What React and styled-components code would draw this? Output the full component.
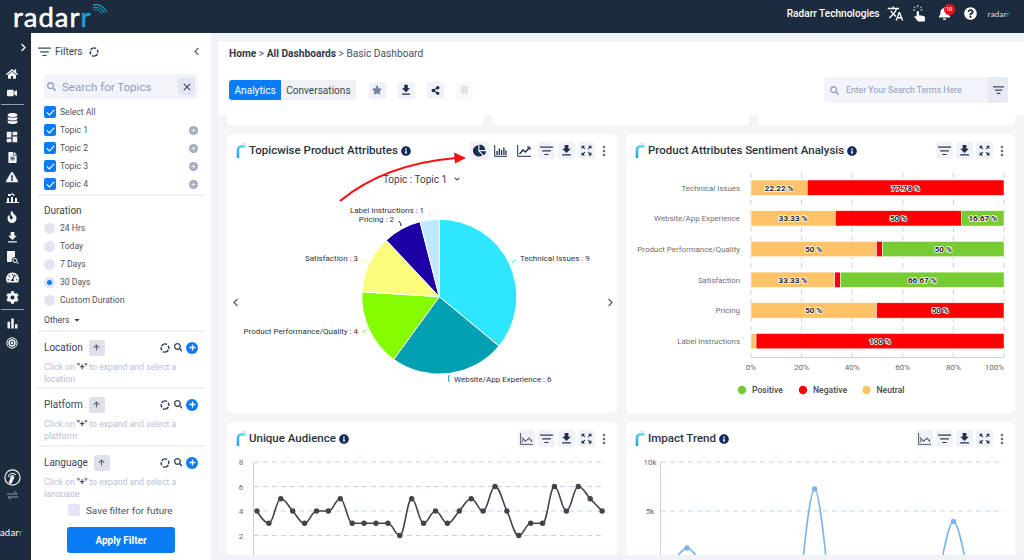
import { createGlobalStyle, styled } from 'styled-components';
import {
  FaHome, FaVideo, FaDatabase, FaFileAlt, FaExclamationTriangle, FaFire, FaTachometerAlt, FaCog,
  FaBell, FaQuestionCircle, FaChartPie, FaStar, FaBookmark, FaShareAlt, FaInfoCircle, FaSearch,
  FaPlus, FaArrowUp, FaChevronLeft, FaChevronRight, FaChevronDown, FaCaretDown,
} from 'react-icons/fa';
import { MdDashboard, MdFileDownload, MdTranslate, MdMoreVert, MdZoomOutMap, MdClose, MdBarChart } from 'react-icons/md';

const GRID = '#c6d1ee';

const GlobalStyle = createGlobalStyle`
  html, body { margin: 0; padding: 0; }
  body { font-family: Roboto, "Liberation Sans", sans-serif; background: #f1f2f7; }
  * { box-sizing: border-box; }
`;

const Page = styled.div`
  position: relative;
  width: 1024px;
  height: 560px;
  overflow: hidden;
  display: flex;
  flex-direction: column;
`;

const TopHeader = styled.header`
  height: 33px;
  flex: none;
  background: #1c2c3e;
  display: flex;
  align-items: flex-start;
  justify-content: space-between;
  padding: 0 14px 0 13px;
  color: #fff;
`;

const Logo = styled.div`
  position: relative;
  font-family: Lato, sans-serif;
  font-size: 27.5px;
  line-height: 33px;
  letter-spacing: 1px;
  -webkit-text-stroke: 0.5px currentColor;
  span { color: #1c9fd6; }
  svg { position: absolute; left: 79px; top: 3px; }
`;

const HeaderRight = styled.div`
  display: flex;
  align-items: center;
  height: 27px;
  font-size: 10.1px;
  font-weight: 500;
`;

const Company = styled.span`
  margin-right: 7px;
`;

const Bell = styled.span`
  position: relative;
  display: flex;
  margin: 0 13px 0 12px;
`;

const Badge = styled.span`
  position: absolute;
  top: -3px;
  left: 6px;
  width: 11px;
  height: 11px;
  border-radius: 50%;
  background: #f3121c;
  font-size: 5.5px;
  line-height: 11px;
  text-align: center;
`;

const MiniLogo = styled.span`
  font-family: Lato, sans-serif;
  font-size: ${({ $big }) => $big ? 9.5 : 8}px;
  letter-spacing: 0.2px;
  color: ${({ $big }) => $big ? '#fff' : '#d7dbe0'};
  margin: ${({ $big }) => $big ? '0 0 0 -5px' : '0 0 0 11px'};
  i { color: #1c9fd6; font-style: normal; }
`;

const Body = styled.div`
  flex: 1;
  display: flex;
  min-height: 0;
`;

const Rail = styled.nav`
  width: 31px;
  flex: none;
  background: #1c2c3e;
  color: #f2f4f7;
  display: flex;
  flex-direction: column;
  padding: 4px 7px 0 0;
  overflow: hidden;
`;

const RailItem = styled.div`
  height: ${({ $h }) => $h || 20}px;
  display: flex;
  align-items: center;
  justify-content: ${({ $end }) => $end ? 'flex-end' : 'center'};
  margin-right: ${({ $end }) => $end ? -4 : 0}px;
  flex: none;
`;

const RailRule = styled.div`
  height: 1px;
  background: #93a0ad;
  margin: 2px 0 4px 1px;
  flex: none;
`;

const RailBottom = styled.div`
  margin-top: auto;
  display: flex;
  flex-direction: column;
  padding-bottom: 18px;
`;

const FilterPanel = styled.aside`
  width: 180px;
  flex: none;
  background: #fff;
  display: flex;
  flex-direction: column;
  color: #4b5262;
`;

const PanelHead = styled.div`
  display: flex;
  align-items: center;
  height: 19px;
  margin: 9px 10px 13px 7px;
  font-size: 10px;
  gap: 4px;
  color: #3b4455;
  span { margin-right: 2px; }
  svg:last-child { margin-left: auto; color: #667085; }
`;

const SearchBox = styled.div`
  height: 25px;
  margin: 0 13px;
  border-radius: 3px;
  background: #f3f4f9;
  display: flex;
  align-items: center;
  padding: 0 3px;
  font-size: 11.5px;
  color: #8d9dbd;
  gap: 5px;
  span { margin-left: 1px; }
`;

const ClearButton = styled.i`
  margin-left: auto;
  width: 17px;
  height: 17px;
  background: #e3e5f0;
  border-radius: 2px;
  display: flex;
  align-items: center;
  justify-content: center;
  color: #2a3f66;
`;

const CheckList = styled.div`
  margin: 4px 7px 0;
  padding: 0 6px 1px;
  border-bottom: 2px solid #eff0f3;
`;

const CheckRow = styled.div`
  height: 18px;
  display: flex;
  align-items: center;
  font-size: 8.6px;
  gap: 4px;
`;

const CheckBox = styled.span`
  width: 12px;
  height: 12px;
  flex: none;
  border-radius: 2px;
  background: #0a7cf5;
  display: flex;
  align-items: center;
  justify-content: center;
`;

const AddDot = styled.span`
  margin-left: auto;
  width: 9px;
  height: 9px;
  border-radius: 50%;
  background: #a3abbd;
  display: flex;
  align-items: center;
  justify-content: center;
  color: #e8eaf0;
`;

const Duration = styled.div`
  margin: 0 7px;
  padding: 7px 6px 0;
  height: 136px;
  border-bottom: 2px solid #eff0f3;
`;

const GroupTitle = styled.div`
  font-size: 10px;
  line-height: 16px;
  color: #3b4455;
`;

const RadioRow = styled.div`
  height: 18px;
  display: flex;
  align-items: center;
  font-size: 8.6px;
  gap: 5px;
  &:first-of-type { margin-top: 2px; }
`;

const Radio = styled.span`
  width: 11px;
  height: 11px;
  border-radius: 50%;
  background: #e4e4f2;
  display: flex;
  align-items: center;
  justify-content: center;
  &::after {
    content: '';
    width: 5px;
    height: 5px;
    border-radius: 50%;
    background: ${({ $on }) => $on ? '#0a7cf5' : 'transparent'};
  }
`;

const Others = styled.div`
  display: flex;
  align-items: center;
  gap: 4px;
  font-size: 8.6px;
  height: 20px;
  margin-top: 1px;
  color: #3b4455;
`;

const FilterGroup = styled.div`
  margin: 0 7px;
  padding: 7px 6px 0;
  height: ${({ $h }) => $h}px;
  overflow: hidden;
  flex: none;
  border-bottom: ${({ $last }) => $last ? 'none' : '2px solid #eff0f3'};
`;

const GroupHead = styled.div`
  display: flex;
  align-items: center;
  height: 17px;
  gap: 6px;
  margin-bottom: 5px;
`;

const UpButton = styled.span`
  width: 16px;
  height: 16px;
  background: #dfe1ea;
  border-radius: 2px;
  display: flex;
  align-items: center;
  justify-content: center;
  color: #5b6477;
`;

const GroupTools = styled.span`
  margin-left: auto;
  display: flex;
  align-items: center;
  gap: 4px;
  color: #39435a;
`;

const PlusDot = styled.span`
  width: 12px;
  height: 12px;
  border-radius: 50%;
  background: #0a7cf5;
  color: #fff;
  display: flex;
  align-items: center;
  justify-content: center;
`;

const Help = styled.div`
  font-size: 8.7px;
  line-height: 12px;
  color: #b8c1d6;
  b { color: #4b5262; }
`;

const SaveRow = styled.div`
  display: flex;
  align-items: center;
  gap: 6px;
  font-size: 9.9px;
  margin-top: 7px;
  height: 12px;
  padding-left: 37px;
  span {
    width: 12px;
    height: 12px;
    border-radius: 2px;
    background: #e4e4f2;
  }
`;

const ApplyButton = styled.button`
  display: block;
  width: 108px;
  height: 26px;
  margin: 11px 0 0 36px;
  border: none;
  border-radius: 3px;
  background: #0a7cf5;
  color: #fff;
  font: 700 10px Roboto, sans-serif;
`;

const Main = styled.main`
  flex: 1;
  min-width: 0;
  padding: 8px 0 5px 7px;
  display: flex;
  flex-direction: column;
`;

const TopBar = styled.section`
  height: 74px;
  flex: none;
  background: #fff;
  padding: 6px 16px 0 11px;
`;

const Crumbs = styled.div`
  font-size: 10.2px;
  line-height: 13px;
  color: #4b5262;
  b { color: #2f3a4c; font-weight: 700; }
`;

const ActionRow = styled.div`
  margin-top: 17px;
  height: 26px;
  display: flex;
  align-items: center;
`;

const Tab = styled.span`
  height: 20px;
  display: flex;
  align-items: center;
  padding: 0 ${({ $active }) => $active ? 5.5 : 5}px;
  font-size: 10.1px;
  background: ${({ $active }) => $active ? '#0a7cf5' : '#f1f2f8'};
  color: ${({ $active }) => $active ? '#fff' : '#3b4455'};
  border-radius: ${({ $active }) => $active ? '3px 0 0 3px' : '0 3px 3px 0'};
`;

const Tabs = styled.div`
  display: flex;
  margin-right: 13px;
`;

const SquareButton = styled.span`
  width: 17px;
  height: 17px;
  margin-right: 12px;
  border-radius: 3px;
  background: ${({ $faint }) => $faint ? '#f8f9fc' : '#f1f2f8'};
  color: ${({ $tone }) => $tone || '#1c2f52'};
  display: flex;
  align-items: center;
  justify-content: center;
`;

const TermSearch = styled.div`
  margin-left: auto;
  width: 184px;
  height: 26px;
  border-radius: 3px;
  background: #f3f4f9;
  display: flex;
  align-items: center;
  padding-left: 6px;
  gap: 7px;
  font-size: 8.7px;
  color: #8d9dbd;
`;

const TermFilter = styled.span`
  margin-left: auto;
  width: 20px;
  height: 26px;
  background: #e8eaf3;
  border-radius: 0 3px 3px 0;
  display: flex;
  align-items: center;
  justify-content: center;
`;

const Dashboard = styled.section`
  flex: 1;
  min-height: 0;
  overflow: hidden;
  background: #f5f5f6;
  padding: 0 9px;
`;

const StubRow = styled.div`
  display: grid;
  grid-template-columns: repeat(3, 1fr);
  gap: 9px;
  margin-bottom: 9px;
`;

const Stub = styled.div`
  height: 10px;
  background: #fff;
  border-radius: 0 0 4px 4px;
`;

const CardGrid = styled.div`
  display: grid;
  grid-template-columns: 390px 389px;
  grid-auto-rows: 279px;
  gap: 9px;
`;

const Card = styled.article`
  background: #fff;
  border-radius: 5px;
  padding-top: 7px;
  overflow: hidden;
`;

const CardHead = styled.div`
  display: flex;
  align-items: center;
  height: 19px;
  padding: 0 8px 0 9px;
`;

const CardTitle = styled.h3`
  margin: 0 0 1px 2px;
  font-size: 11.5px;
  font-weight: 500;
  color: #2a3342;
  white-space: nowrap;
`;

const InfoIcon = styled(FaInfoCircle)`
  margin-left: 3px;
  color: #14295c;
`;

const Toolbar = styled.div`
  margin-left: auto;
  display: flex;
  align-items: center;
  gap: 3px;
`;

const ToolButton = styled.span`
  width: ${({ $active }) => $active ? 19 : 17}px;
  height: ${({ $active }) => $active ? 19 : 17}px;
  margin-right: ${({ $plain }) => $plain ? 3 : 0}px;
  border-radius: 3px;
  background: ${({ $plain }) => $plain ? 'transparent' : '#f1f2f8'};
  color: #1c2f52;
  display: flex;
  align-items: center;
  justify-content: center;
`;

const Dots = styled(MdMoreVert)`
  margin: 0 -3px 0 -2px;
  color: #6a7487;
`;

const TopicSelect = styled.div`
  height: 16px;
  margin-top: 11px;
  padding-right: 1px;
  display: flex;
  align-items: center;
  justify-content: center;
  gap: 7px;
  font-size: 10px;
  color: #3b4455;
`;

const PieRow = styled.div`
  margin-top: 8px;
  padding: 0 4px;
  display: flex;
  align-items: center;
  color: #5c6678;
`;

const PieNav = styled.span`
  width: 9px;
  flex: none;
  display: flex;
  justify-content: center;
`;

const Chart = styled.svg`
  display: block;
  flex: none;
  margin: ${({ $m }) => $m};
  font-family: Roboto, sans-serif;
`;

const Arrow = styled.svg`
  position: absolute;
  left: 335px;
  top: 145px;
`;

const Refresh = ({ size = 10 }) => (
  <svg width={size} height={size} viewBox="0 0 12 12" fill="none" stroke="#39435a" strokeWidth="1.8">
    <path d="M2 3.6A5 5 0 0 1 8.6 1.7" />
    <path d="M10 8.4A5 5 0 0 1 3.4 10.3" />
    <path d="M9.9 3.2A5 5 0 0 1 10.4 7" />
    <path d="M2.1 8.8A5 5 0 0 1 1.6 5" />
  </svg>
);

const FilterLines = ({ w = 13, color = '#2a3a50' }) => (
  <svg width={w} height={w * 0.75} viewBox="0 0 12 9" fill="none" stroke={color} strokeWidth="1.3">
    <path d="M0 1h12M2 4.5h8M4 8h4" />
  </svg>
);

const BarsIcon = () => (
  <svg width="13" height="12" viewBox="0 0 13 12" fill="none" stroke="#1c2f52">
    <path d="M.7 0v11.3H13" strokeWidth="1" />
    <path d="M3 10V6M5.3 10V3.5M7.6 10V5M9.9 10V2.5M12 10V5.5" strokeWidth="1.3" />
  </svg>
);

const TrendIcon = () => (
  <svg width="14" height="12" viewBox="0 0 14 12" fill="none" stroke="#1c2f52">
    <path d="M.7 0v11.3H14" strokeWidth="1" />
    <path d="M2.5 9L6 5l2.5 2L12.5 2.5" strokeWidth="1.4" />
    <path d="M10 2h3v3" strokeWidth="1" />
  </svg>
);

const AreaIcon = () => (
  <svg width="13" height="12" viewBox="0 0 13 12" fill="none" stroke="#3f4d68" strokeWidth=".9">
    <path d="M.6 0v11.4H13" />
    <path d="M2 9.5C4 2 5 9.5 6.5 7.5S9 3 12 8" />
    <path d="M2 4c2 5 4 5 5 3s3-1 5 2" />
  </svg>
);

const ClickHand = () => (
  <svg width="13" height="17" viewBox="0 0 13 17" fill="#fff">
    <path d="M3.6 7.2a1.2 1.2 0 0 1 2.4 0v3l4.5.9c1 .2 1.7 1 1.6 2l-.4 3.4H5.2L1.6 12.3c-.5-.7.3-1.6 1.1-1.1l.9.6z" />
    <path d="M4.8 0v2.2M1 1.6l1.4 1.6M8.6 1.6L7.2 3.2M0 5h2M9.6 5h-2" stroke="#fff" strokeWidth=".9" fill="none" />
  </svg>
);

const TitleMark = ({ id }) => (
  <svg width="11" height="15" viewBox="0 0 11 15" fill="none">
    <defs>
      <linearGradient id={id} x1="0" y1="1" x2="1" y2="0">
        <stop offset="0" stopColor="#17a4e8" />
        <stop offset="1" stopColor="#8fe8ec" />
      </linearGradient>
    </defs>
    <path d="M2 15V7C2 4.5 3.5 3.4 6 3.4H10" stroke={`url(#${id})`} strokeWidth="2.6" />
    <path d="M6 .8h3" stroke="#a5e3ef" strokeWidth="1.2" />
  </svg>
);

function splinePath(pts) {
  let d = `M${pts[0][0]} ${pts[0][1]}`;
  const conts = pts.map(([x, y], i) => {
    const prev = pts[i - 1];
    const next = pts[i + 1];
    if (!prev || !next) return { lx: x, ly: y, rx: x, ry: y };
    const lx = (1.5 * x + prev[0]) / 2.5;
    const rx = (1.5 * x + next[0]) / 2.5;
    let ly = (1.5 * y + prev[1]) / 2.5;
    let ry = (1.5 * y + next[1]) / 2.5;
    const correction = ((ry - ly) * (rx - x)) / (rx - lx) + y - ry;
    ly += correction;
    ry += correction;
    if (ly > prev[1] && ly > y) { ly = Math.max(prev[1], y); ry = 2 * y - ly; }
    else if (ly < prev[1] && ly < y) { ly = Math.min(prev[1], y); ry = 2 * y - ly; }
    if (ry > next[1] && ry > y) { ry = Math.max(next[1], y); ly = 2 * y - ry; }
    else if (ry < next[1] && ry < y) { ry = Math.min(next[1], y); ly = 2 * y - ry; }
    return { lx, ly, rx, ry };
  });
  for (let i = 1; i < pts.length; i++) {
    const a = conts[i - 1];
    const b = conts[i];
    d += `C${a.rx} ${a.ry} ${b.lx} ${b.ly} ${pts[i][0]} ${pts[i][1]}`;
  }
  return d;
}

const slices = [
  { value: 9, color: '#2fe6ff' },
  { value: 6, color: '#00a0b2' },
  { value: 4, color: '#85fc00' },
  { value: 3, color: '#fbfc7c' },
  { value: 2, color: '#1c00a3' },
  { value: 1, color: '#c0e9ff' },
];

const pieLabels = [
  { x: 520, y: 261, text: 'Technical Issues : 9', line: 'M516 260q-3 1-4 3', stroke: '#2fe6ff' },
  { x: 454, y: 382, text: 'Website/App Experience : 6', line: 'M449 375q-1 4 0 7', stroke: '#00a0b2' },
  { x: 358, y: 334, text: 'Product Performance/Quality : 4', end: true, line: 'M362 332q3 0 5-3', stroke: '#85fc00' },
  { x: 358, y: 261, text: 'Satisfaction : 3', end: true, line: 'M362 259q4 1 6 3', stroke: '#fbfc7c' },
  { x: 394, y: 222, text: 'Pricing : 2', end: true, line: 'M399 221q2 2 2 5', stroke: '#1c00a3' },
  { x: 424, y: 213, text: 'Label Instructions : 1', end: true, line: 'M429 211q2 2 1 6', stroke: '#c0e9ff' },
];

function PieChart() {
  const cx = 439.3;
  const cy = 296.7;
  const r = 77.5;
  let acc = 0;
  const paths = slices.map((s) => {
    const a0 = (acc / 25) * 2 * Math.PI;
    acc += s.value;
    const a1 = (acc / 25) * 2 * Math.PI;
    const large = a1 - a0 > Math.PI ? 1 : 0;
    const d = `M${cx} ${cy}L${cx + r * Math.sin(a0)} ${cy - r * Math.cos(a0)}A${r} ${r} 0 ${large} 1 ${cx + r * Math.sin(a1)} ${cy - r * Math.cos(a1)}Z`;
    return <path key={s.color} d={d} fill={s.color} stroke="#fff" strokeWidth="1" />;
  });
  return (
    <Chart width="366" height="215" viewBox="240 195 366 215">
      {paths}
      {pieLabels.map((l) => (
        <g key={l.text}>
          <path d={l.line} fill="none" stroke={l.stroke} strokeWidth="1" />
          <text x={l.x} y={l.y} fontSize="8" fill="#2e3440" textAnchor={l.end ? 'end' : 'start'}>{l.text}</text>
        </g>
      ))}
    </Chart>
  );
}

const NEUTRAL = '#ffc266';
const NEGATIVE = '#ff0000';
const POSITIVE = '#77cc33';

const barRows = [
  { name: 'Technical Issues', parts: [[22.22, NEUTRAL, '22.22 %'], [77.78, NEGATIVE, '77.78 %']] },
  { name: 'Website/App Experience', parts: [[33.33, NEUTRAL, '33.33 %'], [49.9, NEGATIVE, '50 %'], [16.77, POSITIVE, '16.67 %']] },
  { name: 'Product Performance/Quality', parts: [[49.6, NEUTRAL, '50 %'], [2.4, NEGATIVE, ''], [48, POSITIVE, '50 %']] },
  { name: 'Satisfaction', parts: [[33.1, NEUTRAL, '33.33 %'], [2.3, NEGATIVE, ''], [64.6, POSITIVE, '66.67 %']] },
  { name: 'Pricing', parts: [[49.6, NEUTRAL, '50 %'], [50.4, NEGATIVE, '50 %']] },
  { name: 'Label Instructions', parts: [[2, NEUTRAL, ''], [98, NEGATIVE, '100 %']] },
];

function BarChart() {
  const x0 = 751;
  const w = 253;
  const ticks = [0, 20, 40, 60, 80, 100];
  return (
    <Chart width="379" height="230" viewBox="636 172 379 230" $m="12px 0 0 10px">
      {ticks.map((t) => {
        const x = x0 + (t / 100) * w;
        return (
          <g key={t}>
            <path d={`M${x} 173V357`} stroke={GRID} strokeDasharray="5 4" />
            <text x={x} y="370" fontSize="8" fill="#666" textAnchor={t === 100 ? 'end' : 'middle'}>{t}%</text>
          </g>
        );
      })}
      <path d="M751 357.5H1004" stroke={GRID} />
      {barRows.map((row, i) => {
        const y = 180 + i * 30.7;
        let acc = 0;
        return (
          <g key={row.name}>
            <text x="740" y={y + 10.5} fontSize="7.9" fill="#6f6f6f" textAnchor="end">{row.name}</text>
            {row.parts.map(([pct, color]) => {
              const px = x0 + (acc / 100) * w;
              acc += pct;
              return <rect key={color} x={px} y={y} width={(pct / 100) * w} height="15.3" fill={color} stroke="#fff" strokeWidth=".5" />;
            })}
            {(() => {
              let a = 0;
              return row.parts.map(([pct, color, label]) => {
                const c = x0 + ((a + pct / 2) / 100) * w;
                a += pct;
                return label ? (
                  <text
                    key={color}
                    x={c}
                    y={y + 10.5}
                    fontSize="8"
                    fontWeight="700"
                    fill="#222"
                    stroke="#fff"
                    strokeWidth="1.6"
                    paintOrder="stroke"
                    textAnchor="middle"
                  >
                    {label}
                  </text>
                ) : null;
              });
            })()}
          </g>
        );
      })}
      {[['Positive', 742, POSITIVE], ['Negative', 803, NEGATIVE], ['Neutral', 866.5, NEUTRAL]].map(([label, x, color]) => (
        <g key={label}>
          <circle cx={x} cy="390" r="4.2" fill={color} />
          <text x={x + 10} y="393" fontSize="8.6" fontWeight="500" fill="#4a4a4a">{label}</text>
        </g>
      ))}
    </Chart>
  );
}

const audience = [4, 3, 5, 4, 3, 4, 4, 5, 3, 3, 3, 3, 2, 5, 3, 4, 3, 4, 5, 4, 6, 4, 2, 3, 3, 6, 4, 6, 5, 4];

function AudienceChart() {
  const pts = audience.map((v, i) => [257 + i * 11.9, 559 - v * 12.25]);
  return (
    <Chart width="372" height="110" viewBox="235 453 372 110" $m="6px 0 0 8px">
      {[8, 6, 4, 2].map((v) => {
        const y = 559 - v * 12.25;
        return (
          <g key={v}>
            <path d={`M254 ${y}H604`} stroke={GRID} strokeDasharray="5 4" />
            <text x="241" y={y + 3} fontSize="8" fill="#666" textAnchor="middle">{v}</text>
          </g>
        );
      })}
      <path d="M253.5 461V563" stroke={GRID} />
      <path d={splinePath(pts)} fill="none" stroke="#434348" strokeWidth="1.6" />
      {pts.map(([x, y]) => <circle key={x} cx={x} cy={y} r="2.7" fill="#434348" />)}
    </Chart>
  );
}

const impactPeaks = [
  [[675.4, 559], [687, 547], [698.6, 559]],
  [[803, 559], [814.6, 488], [826.2, 559]],
  [[941.9, 559], [953.5, 520.5], [965.1, 559]],
];

function ImpactChart() {
  return (
    <Chart width="372" height="110" viewBox="635 453 372 110" $m="6px 0 0 9px">
      <path d="M661 461H1004M661 510H1004" stroke={GRID} strokeDasharray="5 4" />
      <path d="M660.5 461V563" stroke={GRID} />
      <text x="650" y="464" fontSize="8" fill="#666" textAnchor="middle">10k</text>
      <text x="650" y="513" fontSize="8" fill="#666" textAnchor="middle">5k</text>
      {impactPeaks.map((pts) => (
        <g key={pts[1][0]}>
          <path d={splinePath(pts)} fill="none" stroke="#7cb5ec" strokeWidth="1.6" />
          <circle cx={pts[1][0]} cy={pts[1][1]} r="2.7" fill="#7cb5ec" />
        </g>
      ))}
    </Chart>
  );
}

const DownloadButton = () => <ToolButton><MdFileDownload size={15} /></ToolButton>;
const FilterButton = () => <ToolButton><FilterLines /></ToolButton>;
const ExpandButton = () => <ToolButton><MdZoomOutMap size={13} /></ToolButton>;

function Group({ title, h, last, note }) {
  return (
    <FilterGroup $h={h} $last={last}>
      <GroupHead>
        <GroupTitle>{title}</GroupTitle>
        <UpButton><FaArrowUp size={7} /></UpButton>
        <GroupTools>
          <Refresh />
          <FaSearch size={8.5} />
          <PlusDot><FaPlus size={7} /></PlusDot>
        </GroupTools>
      </GroupHead>
      <Help>Click on <b>"+"</b> to expand and select a {note}</Help>
    </FilterGroup>
  );
}

const Tick = () => (
  <svg width="9" height="7" viewBox="0 0 9 7" fill="none" stroke="#fff" strokeWidth="1.1"><path d="M.8 3.4l2.6 2.5L8.2.8" /></svg>
);

export default function App() {
  return (
    <Page>
      <GlobalStyle />
      <TopHeader>
        <Logo>
          radar<span>r</span>
          <svg width="16" height="16" viewBox="0 0 16 16" fill="none" strokeWidth="1.1">
            <path d="M1 2.2C6 0.5 12 3 14.6 9" stroke="#1fa8c4" />
            <path d="M1 4.6C5 3.4 10 5 12.4 10" stroke="#1f93b6" />
            <path d="M1.5 7C4.5 6 8 7.5 10 11" stroke="#1b7fa8" />
          </svg>
        </Logo>
        <HeaderRight>
          <Company>Radarr Technologies</Company>
          <MdTranslate size={17} />
          <span style={{ width: 9 }} />
          <ClickHand />
          <Bell>
            <FaBell size={13} />
            <Badge>10</Badge>
          </Bell>
          <FaQuestionCircle size={13} />
          <MiniLogo>radar<i>r</i></MiniLogo>
        </HeaderRight>
      </TopHeader>
      <Body>
        <Rail>
          <RailItem $end><FaChevronRight size={9} /></RailItem>
          <RailItem $h={7} />
          <RailItem><FaHome size={12} /></RailItem>
          <RailItem $h={18}><FaVideo size={10} /></RailItem>
          <RailRule />
          <RailItem $h={18}><FaDatabase size={11} /></RailItem>
          <RailItem><MdDashboard size={14} /></RailItem>
          <RailItem><FaFileAlt size={11} /></RailItem>
          <RailItem><FaExclamationTriangle size={12} /></RailItem>
          <RailItem>
            <svg width="13" height="12" viewBox="0 0 13 12" fill="currentColor"><path d="M1 7h2v4H1zM5 6h2v5H5zM9 7h2v4H9zM0 11h13v1H0zM2 3h3v2H2zM6 2l3 2-1 1-3-2z" /></svg>
          </RailItem>
          <RailItem><FaFire size={12} /></RailItem>
          <RailItem><MdFileDownload size={15} /></RailItem>
          <RailItem>
            <svg width="13" height="13" viewBox="0 0 13 13" fill="currentColor"><path d="M1 0h8v6a3.5 3.5 0 0 0-3 5H1z" /><circle cx="9" cy="9.5" r="2" fill="none" stroke="currentColor" /><path d="M10.5 11l2 2" stroke="currentColor" /></svg>
          </RailItem>
          <RailItem><FaTachometerAlt size={13} /></RailItem>
          <RailItem><FaCog size={13} /></RailItem>
          <RailRule />
          <RailItem $h={19}><MdBarChart size={15} /></RailItem>
          <RailItem $h={19}>
            <svg width="12" height="12" viewBox="0 0 12 12" fill="none" stroke="currentColor"><circle cx="6" cy="6" r="5.2" /><circle cx="6" cy="6" r="3" strokeWidth="1.4" /><circle cx="6" cy="6" r="1" fill="currentColor" /></svg>
          </RailItem>
          <RailBottom>
            <RailItem $h={18}>
              <svg width="17" height="17" viewBox="0 0 17 17" fill="none" stroke="currentColor"><circle cx="8.5" cy="8.5" r="7.6" strokeWidth="1.2" /><path d="M4 8a4.5 4.5 0 0 1 8-2M6 9a2.6 2.6 0 0 1 4.5-2" /><path d="M8 7l2 1.5-3 6-2-1z" fill="currentColor" /></svg>
            </RailItem>
            <RailItem $h={18}>
              <svg width="11" height="9" viewBox="0 0 11 9" fill="none" stroke="#8f9bab"><path d="M0 3h10L7 .5M11 6H1l3 2.5" /></svg>
            </RailItem>
            <RailItem $h={18} />
            <RailItem $h={20}><MiniLogo $big>radar<i>r</i></MiniLogo></RailItem>
          </RailBottom>
        </Rail>
        <FilterPanel>
          <PanelHead>
            <FilterLines color="#3a4a66" />
            <span>Filters</span>
            <Refresh />
            <FaChevronLeft size={9} />
          </PanelHead>
          <SearchBox>
            <FaSearch size={9} color="#93a3c0" />
            <span>Search for Topics</span>
            <ClearButton><MdClose size={12} /></ClearButton>
          </SearchBox>
          <CheckList>
            <CheckRow><CheckBox><Tick /></CheckBox>Select All</CheckRow>
            {['Topic 1', 'Topic 2', 'Topic 3', 'Topic 4'].map((t) => (
              <CheckRow key={t}>
                <CheckBox><Tick /></CheckBox>{t}
                <AddDot><FaPlus size={5} /></AddDot>
              </CheckRow>
            ))}
          </CheckList>
          <Duration>
            <GroupTitle>Duration</GroupTitle>
            {['24 Hrs', 'Today', '7 Days', '30 Days', 'Custom Duration'].map((d) => (
              <RadioRow key={d}><Radio $on={d === '30 Days'} />{d}</RadioRow>
            ))}
            <Others>Others <FaCaretDown size={8} /></Others>
          </Duration>
          <Group title="Location" h={57} note="location" />
          <Group title="Platform" h={58} note="platform" />
          <Group title="Language" h={50} note="language" last />
          <SaveRow><span />Save filter for future</SaveRow>
          <ApplyButton>Apply Filter</ApplyButton>
        </FilterPanel>
        <Main>
          <TopBar>
            <Crumbs><b>Home</b> &gt; <b>All Dashboards</b> &gt; Basic Dashboard</Crumbs>
            <ActionRow>
              <Tabs>
                <Tab $active>Analytics</Tab>
                <Tab>Conversations</Tab>
              </Tabs>
              <SquareButton $tone="#7484a6"><FaStar size={10} /></SquareButton>
              <SquareButton><MdFileDownload size={14} /></SquareButton>
              <SquareButton><FaShareAlt size={9} /></SquareButton>
              <SquareButton $faint $tone="#dfe3ec"><FaBookmark size={9} /></SquareButton>
              <TermSearch>
                <FaSearch size={9} color="#93a3c0" />
                Enter Your Search Terms Here
                <TermFilter><FilterLines w={11} color="#3a4a66" /></TermFilter>
              </TermSearch>
            </ActionRow>
          </TopBar>
          <Dashboard>
            <StubRow><Stub /><Stub /><Stub /></StubRow>
            <CardGrid>
              <Card>
                <CardHead>
                  <TitleMark id="mark-a" />
                  <CardTitle>Topicwise Product Attributes</CardTitle>
                  <InfoIcon size={10} />
                  <Toolbar>
                    <ToolButton $active><FaChartPie size={13} /></ToolButton>
                    <ToolButton $plain><BarsIcon /></ToolButton>
                    <ToolButton $plain><TrendIcon /></ToolButton>
                    <FilterButton />
                    <DownloadButton />
                    <ExpandButton />
                    <Dots size={16} />
                  </Toolbar>
                </CardHead>
                <TopicSelect>Topic : Topic 1 <FaChevronDown size={6} /></TopicSelect>
                <PieRow>
                  <PieNav><FaChevronLeft size={9} /></PieNav>
                  <PieChart />
                  <PieNav><FaChevronRight size={9} /></PieNav>
                </PieRow>
              </Card>
              <Card>
                <CardHead>
                  <TitleMark id="mark-b" />
                  <CardTitle>Product Attributes Sentiment Analysis</CardTitle>
                  <InfoIcon size={10} />
                  <Toolbar>
                    <FilterButton />
                    <DownloadButton />
                    <ExpandButton />
                    <Dots size={16} />
                  </Toolbar>
                </CardHead>
                <BarChart />
              </Card>
              <Card>
                <CardHead>
                  <TitleMark id="mark-c" />
                  <CardTitle>Unique Audience</CardTitle>
                  <InfoIcon size={10} />
                  <Toolbar>
                    <ToolButton><AreaIcon /></ToolButton>
                    <FilterButton />
                    <DownloadButton />
                    <ExpandButton />
                    <Dots size={16} />
                  </Toolbar>
                </CardHead>
                <AudienceChart />
              </Card>
              <Card>
                <CardHead>
                  <TitleMark id="mark-d" />
                  <CardTitle>Impact Trend</CardTitle>
                  <InfoIcon size={10} />
                  <Toolbar>
                    <ToolButton><AreaIcon /></ToolButton>
                    <FilterButton />
                    <DownloadButton />
                    <ExpandButton />
                    <Dots size={16} />
                  </Toolbar>
                </CardHead>
                <ImpactChart />
              </Card>
            </CardGrid>
          </Dashboard>
        </Main>
      </Body>
      <Arrow width="135" height="65" viewBox="335 145 135 65">
        <path d="M340 201Q385 164 456 158" fill="none" stroke="#f5120f" strokeWidth="2.2" />
        <path d="M454 152.5L466 158L455 163.5Z" fill="#f5120f" />
      </Arrow>
    </Page>
  );
}
